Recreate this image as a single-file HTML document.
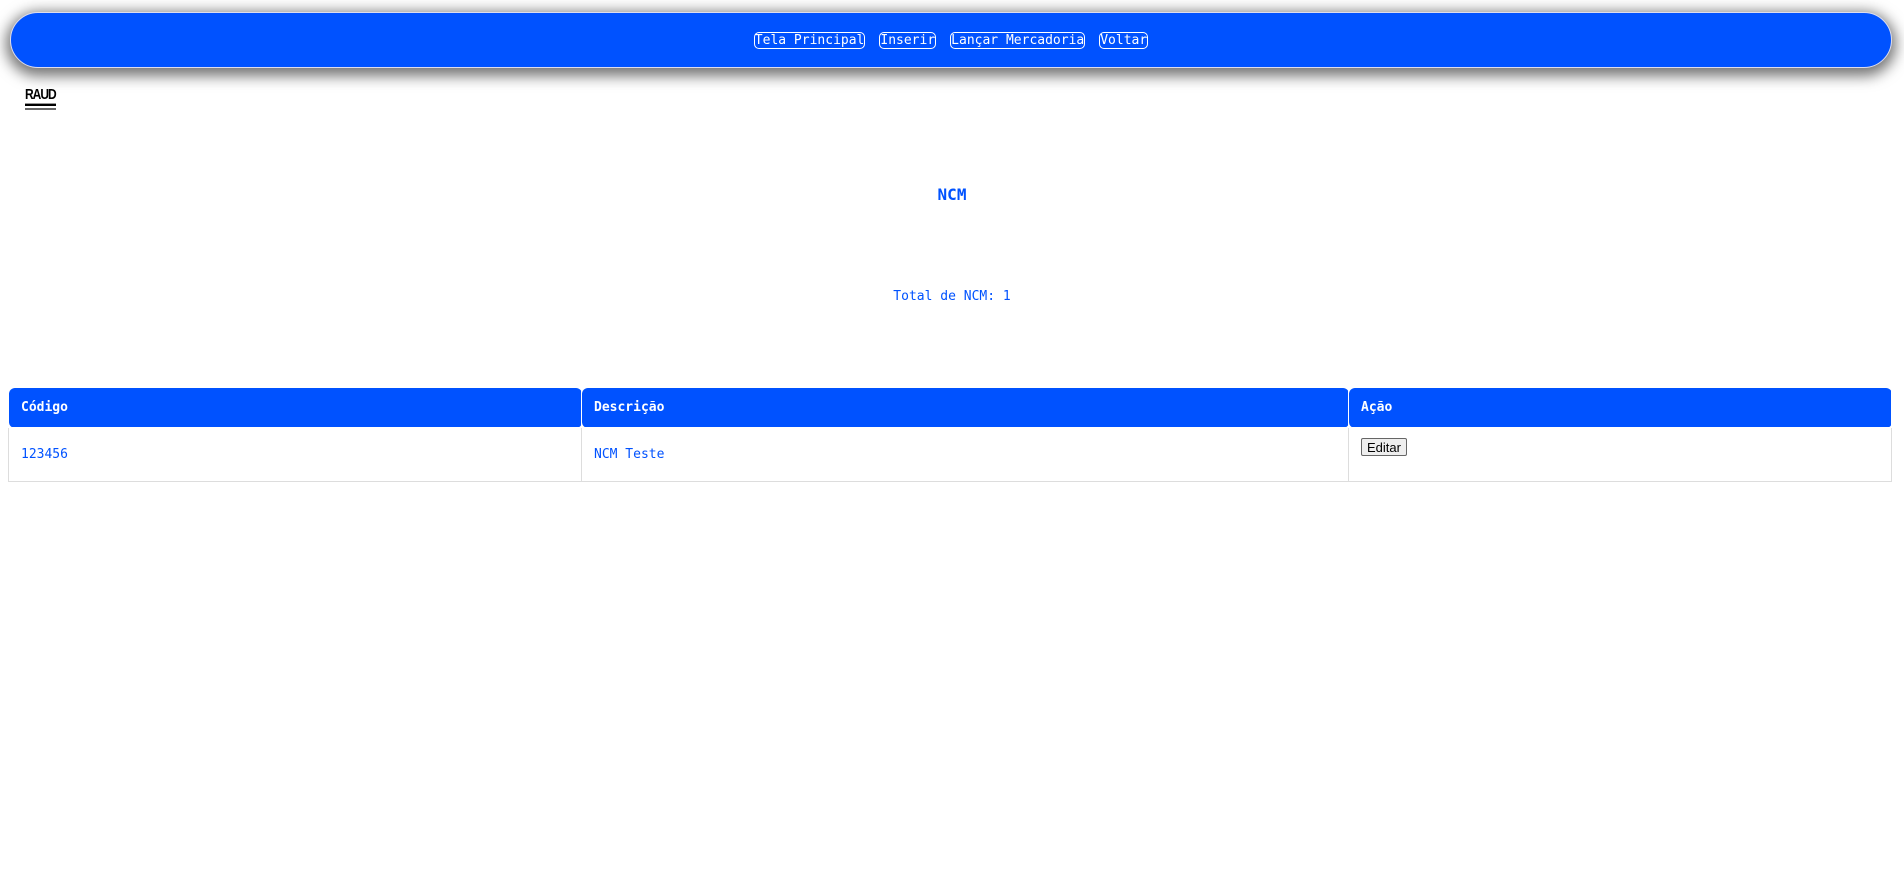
<!DOCTYPE html>
<html><head><meta charset="utf-8"><style>
body{margin:0;background:#fff;font-family:"DejaVu Sans Mono","Liberation Mono",monospace;width:1904px;height:882px;overflow:hidden;position:relative}
.nav{position:absolute;left:10px;top:12px;width:1880px;height:54px;background:#0052ff;border:1px solid #dde;border-radius:28px;box-shadow:0 4px 14px 4px rgba(0,0,0,.55);text-align:center}
.nav span{display:inline-block;color:#fff;border:1.5px solid #fff;border-radius:5px;font-size:13px;line-height:15px;padding:0;margin:19px 7px 0}
.logo{position:absolute;left:25px;top:88px;width:32px;height:22px;font:bold 12px "Liberation Sans",sans-serif;letter-spacing:-1px;color:#000;line-height:11px;transform:scaleY(1.2);transform-origin:top}
.logo i{display:block;height:2px;background:#000;margin-top:2px;width:31px}
h1{position:absolute;top:185px;left:0;width:1904px;text-align:center;margin:0;color:#0052ff;font-size:16px;font-weight:bold}
.tot{position:absolute;top:289px;left:0;width:1904px;text-align:center;color:#0052ff;font-size:13px}
table{position:absolute;left:8px;top:387px;width:1884px;border-collapse:collapse;border:1px solid #ddd}
th{background:#0052ff;color:#fff;text-align:left;font-size:13px;height:39px;padding:0 12px;border-radius:6px;border:1px solid #fff}
td{height:53px;padding:0 12px;font-size:13px;color:#0052ff;border:1px solid #ddd}
td.b{vertical-align:top;padding-top:10px;height:43px}
button{font:13px "Liberation Sans",sans-serif;padding:0 5px;height:18px;border:1px solid #666;background:#eee;border-radius:2px}
</style></head><body>
<div class="nav"><span>Tela Principal</span><span>Inserir</span><span>Lançar Mercadoria</span><span>Voltar</span></div>
<div class="logo">RAUD<i></i><i style="height:1px"></i></div>
<h1>NCM</h1>
<div class="tot">Total de NCM: 1</div>
<table><tr><th style="width:548px">Código</th><th style="width:742px">Descrição</th><th>Ação</th></tr>
<tr><td>123456</td><td>NCM Teste</td><td class="b"><button>Editar</button></td></tr></table>
</body></html>
